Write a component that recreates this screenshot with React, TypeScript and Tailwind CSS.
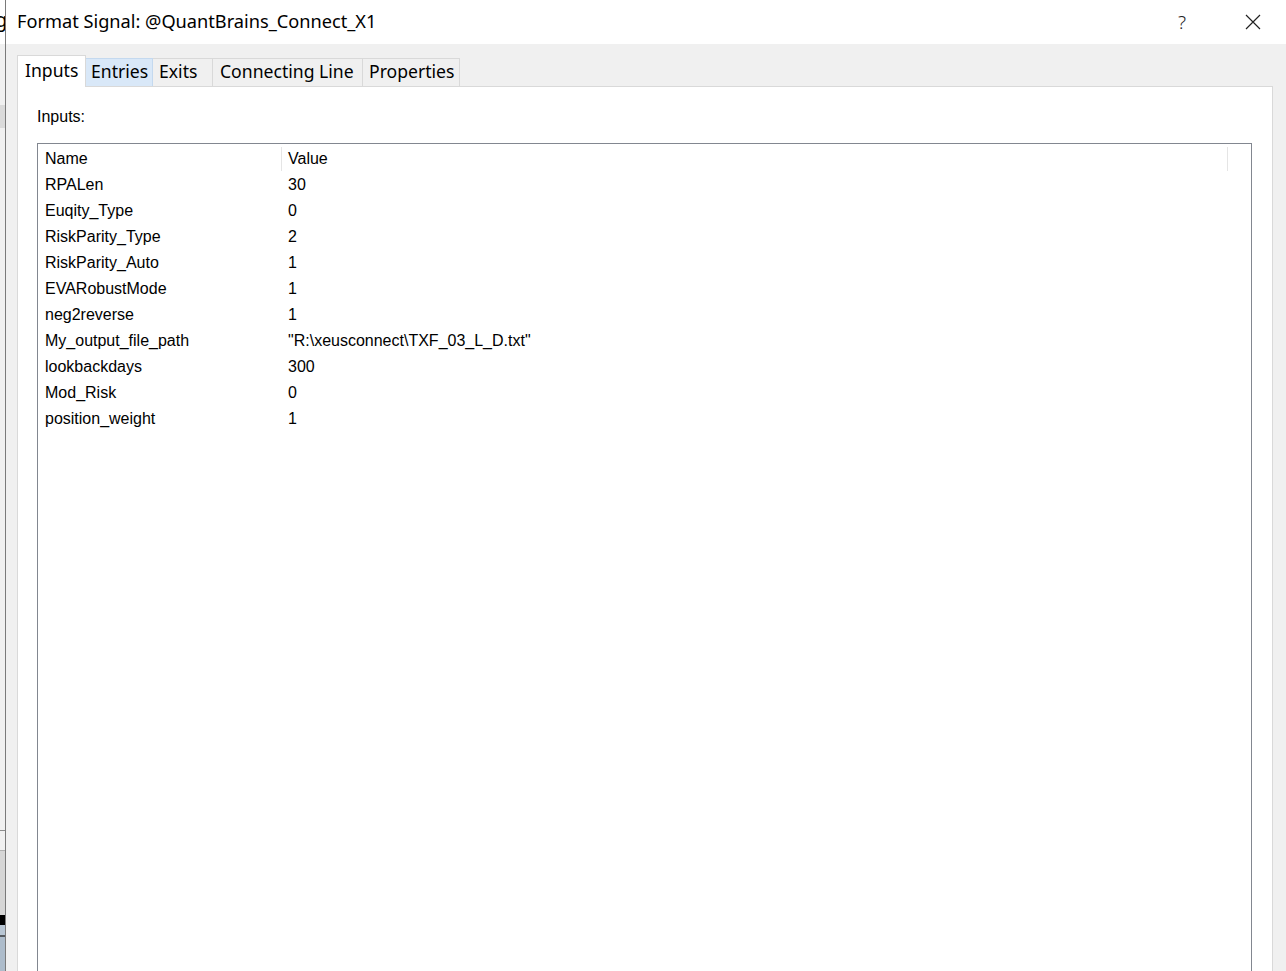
import React from 'react';

const rows: [string, string][] = [
  ['RPALen', '30'],
  ['Euqity_Type', '0'],
  ['RiskParity_Type', '2'],
  ['RiskParity_Auto', '1'],
  ['EVARobustMode', '1'],
  ['neg2reverse', '1'],
  ['My_output_file_path', '"R:\\xeusconnect\\TXF_03_L_D.txt"'],
  ['lookbackdays', '300'],
  ['Mod_Risk', '0'],
  ['position_weight', '1'],
];

const tabs = [
  { label: 'Entries', w: 'w-[67px]', bg: 'bg-[#d9e8f8] border-[#c4d9ef]', pl: 'pl-[5px]' },
  { label: 'Exits', w: 'w-[60px]', bg: 'bg-[#f0f0f0] border-[#d9d9d9]', pl: 'pl-[6px]' },
  { label: 'Connecting Line', w: 'w-[150px]', bg: 'bg-[#f0f0f0] border-[#d9d9d9]', pl: 'pl-[7px]' },
  { label: 'Properties', w: 'w-[97px]', bg: 'bg-[#f0f0f0] border-[#d9d9d9]', pl: 'pl-[6px]' },
];

function BackStrip() {
  return (
    <div className="flex w-[5px] shrink-0 flex-col overflow-hidden">
      <div className="h-[44px] overflow-hidden bg-white">
        <span className="-ml-[5px] block pt-[10px] text-[20px] leading-none text-black" style={{ fontFamily: '"Noto Sans", sans-serif' }}>
          g
        </span>
      </div>
      <div className="h-[61px] bg-[#f0f0f0]" />
      <div className="h-[23px] bg-[#dadada]" />
      <div className="h-[702px] bg-[#f0f0f0]" />
      <div className="h-px bg-[#8c8c8c]" />
      <div className="h-[19px] bg-[#f0f0f0]" />
      <div className="h-px bg-[#b0b0b0]" />
      <div className="h-[64px] bg-[#d6d6d6]" />
      <div className="h-[10px] bg-black" />
      <div className="h-[10px] bg-[#b8c6d4]" />
      <div className="h-[2px] bg-[#555a60]" />
      <div className="flex-1 bg-[#adbccb]" />
    </div>
  );
}

export default function App() {
  const ui = { fontFamily: '"Noto Sans", "Open Sans", sans-serif' };
  const arial = { fontFamily: '"Liberation Sans", Arial, sans-serif' };

  return (
    <div className="flex h-[971px] w-[1286px] overflow-hidden bg-white">
      <BackStrip />
      <div className="w-px shrink-0 bg-[#7a7a7a]" />
      <div className="flex min-w-0 flex-1 flex-col">
        {/* title bar */}
        <div className="flex h-[44px] shrink-0 items-center bg-white" style={ui}>
          <span className="ml-[11px] text-[18.2px] text-black">
            Format Signal: @QuantBrains_Connect_X1
          </span>
          <span className="ml-auto mr-[59px] text-[19px] font-light text-[#222]">?</span>
          <svg width="16" height="16" viewBox="0 0 16 16" className="mr-[25px]">
            <path d="M1 1L15 15M15 1L1 15" stroke="#222" strokeWidth="1.2" />
          </svg>
        </div>

        {/* body */}
        <div className="flex min-h-0 flex-1 flex-col bg-[#f0f0f0] pl-[11px] pr-[13px] pt-[11px]">
          <div className="flex h-[31px] shrink-0 items-end" style={ui}>
            <div className="relative z-10 -mb-px flex h-[32px] w-[69px] items-start border border-b-0 border-[#d9d9d9] bg-white pl-[7px] pt-[1px] text-[17.6px] text-black">
              Inputs
            </div>
            {tabs.map((t) => (
              <div
                key={t.label}
                className={`flex h-[28px] ${t.w} items-center border border-b-0 border-l-0 ${t.bg} ${t.pl} pb-[2px] text-[17.6px] text-black`}
              >
                {t.label}
              </div>
            ))}
          </div>

          <div className="flex min-h-0 flex-1 flex-col border border-b-0 border-[#d9d9d9] bg-white pl-[19px] pr-[20px]" style={arial}>
            <div className="pt-[21px] text-[16px] leading-[18px] text-black">Inputs:</div>
            <div className="mt-[17px] flex-1 border border-b-0 border-[#828790] pt-[2px]">
              <div className="flex h-[26px] items-center text-[16px] text-black">
                <div className="flex h-[24px] w-[244px] items-center border-r border-[#e5e5e5] pl-[7px]">Name</div>
                <div className="flex h-[24px] w-[946px] items-center border-r border-[#e5e5e5] pl-[6px]">Value</div>
              </div>
              {rows.map(([n, v]) => (
                <div key={n} className="flex h-[26px] items-center text-[16px] text-black">
                  <div className="w-[244px] pl-[7px]">{n}</div>
                  <div className="pl-[6px]">{v}</div>
                </div>
              ))}
            </div>
          </div>
        </div>
      </div>
    </div>
  );
}
